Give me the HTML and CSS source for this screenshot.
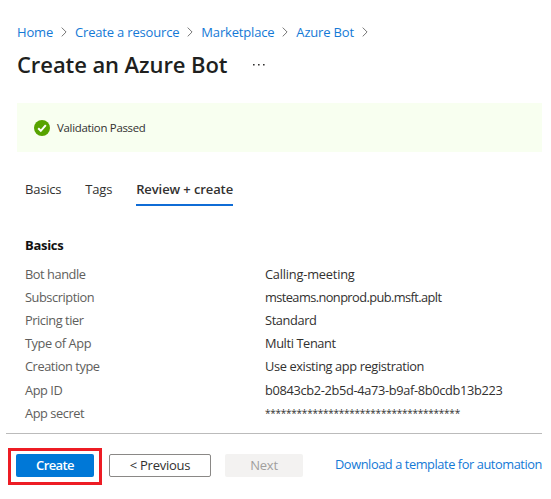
FILE: index.html
```html
<!DOCTYPE html>
<html lang="en">
<head>
<meta charset="utf-8">
<title>Create an Azure Bot</title>
<link rel="stylesheet" href="styles.css">
</head>
<body>
<nav class="crumbs">
  <a>Home</a><svg class="chev" viewBox="0 0 6 10"><path d="M.7.6 5.1 5 .7 9.4"/></svg>
  <a>Create a resource</a><svg class="chev" viewBox="0 0 6 10"><path d="M.7.6 5.1 5 .7 9.4"/></svg>
  <a>Marketplace</a><svg class="chev" viewBox="0 0 6 10"><path d="M.7.6 5.1 5 .7 9.4"/></svg>
  <a>Azure Bot</a><svg class="chev" viewBox="0 0 6 10"><path d="M.7.6 5.1 5 .7 9.4"/></svg>
</nav>
<header class="title">
  <h1>Create an Azure Bot</h1>
  <svg class="more" viewBox="0 0 12 2"><path d="M0 0h1.6v1.6H0zM5 0h1.6v1.6H5zM10 0h1.6v1.6H10z"/></svg>
</header>
<div class="banner">
  <svg class="ok" viewBox="0 0 16 16"><circle cx="8" cy="8" r="8"/><path d="M4.2 8.2 6.8 10.8 11.8 5.2"/></svg>
  <span>Validation Passed</span>
</div>
<div class="tabs">
  <span class="tab">Basics</span>
  <span class="tab">Tags</span>
  <span class="tab active">Review + create</span>
</div>
<section class="details">
  <h2>Basics</h2>
  <dl>
    <dt>Bot handle</dt><dd class="handle">Calling-meeting</dd>
    <dt>Subscription</dt><dd class="subscription">msteams.nonprod.pub.msft.aplt</dd>
    <dt>Pricing tier</dt><dd>Standard</dd>
    <dt>Type of App</dt><dd>Multi Tenant</dd>
    <dt>Creation type</dt><dd>Use existing app registration</dd>
    <dt>App ID</dt><dd class="guid">b0843cb2-2b5d-4a73-b9af-8b0cdb13b223</dd>
    <dt>App secret</dt><dd class="secret">*************************************</dd>
  </dl>
</section>
<footer class="actions">
  <div class="highlight"><button class="btn primary">Create</button></div>
  <button class="btn previous">&lt; Previous</button>
  <button class="btn next" disabled>Next</button>
  <a class="download">Download a template for automation</a>
</footer>
</body>
</html>
```
FILE: styles.css
```css
* { box-sizing: border-box; }
body {
  margin: 0;
  padding: 22px 9px 0 6px;
  width: 551px;
  height: 499px;
  overflow: hidden;
  background: #fff;
  color: #323130;
  font: 13px/20px "Open Sans", "Noto Sans", sans-serif;
  white-space: nowrap;
}
a { color: #1479d6; }
.crumbs { display: flex; align-items: center; height: 20px; padding-left: 11px; letter-spacing: -.18px; }
.chev { width: 6px; height: 10px; margin: 0 8px; fill: none; stroke: #777; stroke-width: 1; }
.title { display: flex; align-items: center; height: 30px; margin-top: 7px; padding-left: 11px; }
h1 { margin: 0; font-size: 22px; line-height: 30px; font-weight: 600; letter-spacing: -.08px; color: #201f1e; width: 236px; }
.more { width: 12px; height: 2px; margin-top: 2px; fill: #323130; }
.banner { display: flex; align-items: center; height: 49px; margin: 24px 0 0 11px; padding-left: 17px; background: #f8fff0; font-size: 11.4px; letter-spacing: -.28px; }
.ok { width: 16px; height: 16px; margin-right: 7px; fill: #57a300; }
.ok path { fill: none; stroke: #fff; stroke-width: 2; }
.tabs { display: flex; height: 27px; margin: 27px 0 0 19px; letter-spacing: -.2px; }
.tab { margin-right: 24px; }
.active { border-bottom: 2px solid #0f6cd6; font-weight: 600; letter-spacing: -.1px; }
.details { margin: 29px 0 0 19px; }
h2 { margin: 0 0 7px; font-size: 13px; line-height: 20px; font-weight: 700; letter-spacing: -.3px; color: #111; }
dl { display: grid; grid-template-columns: 240px 1fr; grid-auto-rows: 23.2px; align-items: center; margin: 0; font-size: 12.8px; letter-spacing: -.38px; }
dt { color: #605e5c; letter-spacing: -.44px; }
dd { margin: 0; }
.handle { letter-spacing: -.2px; }
.subscription { letter-spacing: -.58px; }
.guid { letter-spacing: -.33px; }
.secret { font-size: 10px; letter-spacing: -.24px; }
.actions { display: flex; align-items: flex-start; height: 60px; margin-top: 9px; padding-top: 14px; border-top: 1px solid #bbb; }
.actions > * { flex-shrink: 0; }
.highlight { width: 94px; height: 37px; margin-left: 2px; padding: 3px 0 0 5px; border: 3px solid #ed1c24; }
.btn { display: block; height: 23px; padding: 0; border: 0; border-radius: 2px; font: inherit; letter-spacing: -.25px; line-height: 21px; }
.primary { width: 78px; background: #0078d7; color: #fff; font-weight: 600; letter-spacing: -.6px; }
.previous { width: 102px; margin: 6px 0 0 7px; border: 1px solid #8a8886; background: #fff; color: #323130; }
.next { width: 78px; margin: 6px 0 0 14px; background: #f3f2f1; color: #a19f9d; }
.download { margin: 6px 0 0 32px; font-size: 12.8px; letter-spacing: -.42px; }
```
